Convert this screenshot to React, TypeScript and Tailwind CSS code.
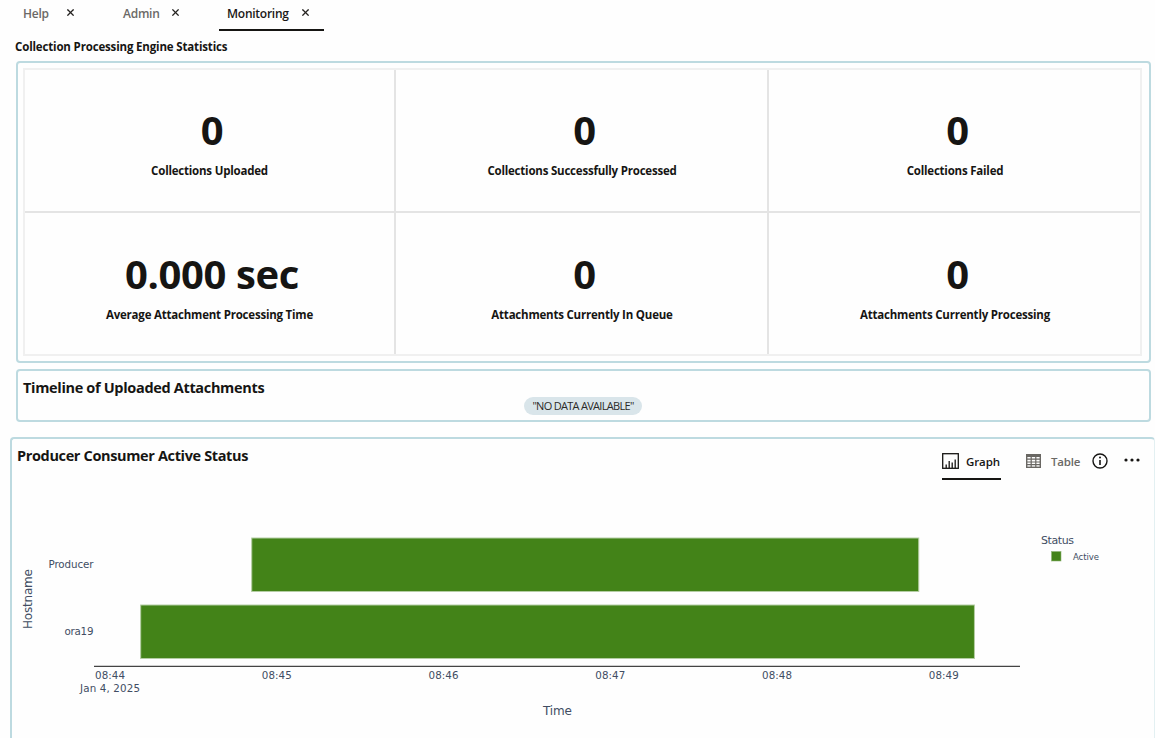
import { X } from "lucide-react"

interface Tab {
  label: string
  active?: boolean
  className: string
  labelClass: string
}

const tabs: Tab[] = [
  { label: "Help", className: "w-[79px] pl-2 mr-[21px]", labelClass: "w-[25px] mr-[17px] text-[#6b6966]" },
  { label: "Admin", className: "w-[79px] pl-2 mr-[25px]", labelClass: "w-[35px] mr-[12px] text-[#6b6966]" },
  { label: "Monitoring", active: true, className: "w-[105px] pl-2", labelClass: "w-[61px] mr-[12px] text-[#1a1816]" },
]

const stats = [
  { value: "0", label: "Collections Uploaded" },
  { value: "0", label: "Collections Successfully Processed" },
  { value: "0", label: "Collections Failed" },
  { value: "0.000 sec", label: "Average Attachment Processing Time" },
  { value: "0", label: "Attachments Currently In Queue" },
  { value: "0", label: "Attachments Currently Processing" },
]

const ticks = ["08:44", "08:45", "08:46", "08:47", "08:48", "08:49"]

// start and end are minutes after 08:44
const rows = [
  { host: "Producer", start: 0.85, end: 4.85, y: 48, labelWidth: 45 },
  { host: "ora19", start: 0.184, end: 5.184, y: 115, labelWidth: 29 },
]

const minuteX = (minute: number) => 98 + minute * 166.75

function TabBar() {
  return (
    <nav className="flex h-8 pl-[15px]">
      {tabs.map((tab) => (
        <div key={tab.label} className={`relative flex h-[31px] items-start pt-1 ${tab.className}`}>
          <span className={`text-[12px] leading-[19px] font-semibold whitespace-nowrap tracking-[-0.25px] ${tab.labelClass}`}>
            {tab.label}
          </span>
          <X className="mt-[3px] h-[11px] w-[11px] text-[#242220]" strokeWidth={2.6} />
          {tab.active && <div className="absolute inset-x-0 bottom-0 h-[2px] bg-[#161513]" />}
        </div>
      ))}
    </nav>
  )
}

function StatGrid() {
  return (
    <section className="ml-4 mt-[5px] h-[302px] w-[1135px] rounded border-2 border-[#bddae0] p-[5px] pr-[7px]">
      <div className="grid h-[288px] grid-cols-[371px_373px_1fr] grid-rows-[143px_1fr] border-2 border-[#f0f0f0]">
        {stats.map((stat, i) => (
          <div
            key={stat.label}
            className={`flex flex-col items-center border-[#e4e4e4] ${i % 3 < 2 ? "border-r-2" : ""} ${i % 3 > 0 ? "pl-px" : ""} ${i < 3 ? "border-b-2 pt-8" : "pt-[33px]"}`}
          >
            <div className="pl-[5px] text-[40px] leading-[56px] font-bold tracking-[-0.4px] whitespace-nowrap">{stat.value}</div>
            <div className="mt-[5px] text-[11.5px] leading-4 font-bold tracking-[-0.21px] whitespace-nowrap">{stat.label}</div>
          </div>
        ))}
      </div>
    </section>
  )
}

function GraphIcon() {
  return (
    <svg width="17" height="16" viewBox="0 0 17 16" fill="none" stroke="#161513" strokeWidth="1.3">
      <rect x="0.7" y="0.7" width="15.6" height="14.6" />
      <path d="M4.2 15v-3.5M7.2 15V8M10.2 15V9.5M13.2 15V6.5" />
    </svg>
  )
}

function TableIcon() {
  return (
    <svg width="15" height="14" viewBox="0 0 15 14" fill="none" stroke="#696763" strokeWidth="1.4">
      <rect x="0.7" y="0.7" width="13.6" height="12.6" />
      <path d="M0 2h15" strokeWidth="2" />
      <path d="M1 5.2h13M1 8h13M1 10.7h13M5.2 2v11M9.8 2v11" strokeWidth="1.2" />
    </svg>
  )
}

function Toolbar() {
  return (
    <div className="flex h-[41px] pt-3 text-[11.5px] leading-[18px] font-semibold">
      <div className="flex h-[29px] w-[59px] border-b-2 border-[#161513]">
        <div className="mt-[2px]"><GraphIcon /></div>
        <span className="ml-[7px] mt-[2px] tracking-[-0.1px]">Graph</span>
      </div>
      <div className="ml-[25px] mt-[3px]"><TableIcon /></div>
      <span className="ml-[10px] mt-[2px] w-[30px] tracking-[-0.2px] text-[#6b6966]">Table</span>
      <svg className="ml-[11px] mt-[2px]" width="16" height="16" viewBox="0 0 16 16" fill="none" stroke="#161513" strokeWidth="1.4">
        <circle cx="8" cy="8" r="7" />
        <path d="M8 7v5" strokeWidth="1.6" />
        <circle cx="8" cy="4.5" r="1" fill="#161513" stroke="none" />
      </svg>
      <svg className="ml-4 mt-[7px]" width="17" height="4" viewBox="0 0 17 4" fill="#161513">
        <circle cx="2" cy="2" r="1.6" />
        <circle cx="8" cy="2" r="1.6" />
        <circle cx="14" cy="2" r="1.6" />
      </svg>
    </div>
  )
}

function StatusChart() {
  return (
    <svg
      className="block font-['DejaVu_Sans',sans-serif]"
      width="1141"
      height="248"
      viewBox="0 0 1141 248"
      fill="#414d63"
      fontSize="10.3"
    >
      {rows.map((row) => (
        <g key={row.host}>
          <text x="81.5" y={row.y + 30} textAnchor="end" textLength={row.labelWidth}>{row.host}</text>
          <rect
            x={minuteX(row.start)}
            y={row.y}
            width={minuteX(row.end) - minuteX(row.start)}
            height="53.5"
            fill="#438318"
            stroke="#b4cda3"
            strokeWidth="1"
          />
        </g>
      ))}
      <path d="M82 176.3H1008" stroke="#444" strokeWidth="1.2" />
      {ticks.map((tick, i) => (
        <text key={tick} x={minuteX(i)} y="188.5" textAnchor="middle" textLength="30">{tick}</text>
      ))}
      <text x={minuteX(0)} y="202" textAnchor="middle" textLength="60">Jan 4, 2025</text>
      <text x="545.5" y="225" textAnchor="middle" fontSize="12" textLength="29">Time</text>
      <text transform="translate(20 109) rotate(-90)" textAnchor="middle" fontSize="12" textLength="60">Hostname</text>
      <text x="1029" y="54" fontSize="11" textLength="33">Status</text>
      <rect x="1039.5" y="61.5" width="9.5" height="9.5" fill="#438318" stroke="#8eb276" strokeWidth="0.6" />
      <text x="1061" y="70" fontSize="8.5" textLength="26">Active</text>
    </svg>
  )
}

export default function App() {
  return (
    <main className="h-[738px] w-[1155px] overflow-hidden bg-[#fefefe] font-['Open_Sans',sans-serif] text-[#161513]">
      <TabBar />
      <h1 className="ml-[15px] mt-[6px] h-[18px] text-[11.5px] leading-[18px] font-bold tracking-[-0.16px]">
        Collection Processing Engine Statistics
      </h1>
      <StatGrid />

      <section className="ml-4 mt-[6px] h-[53px] w-[1135px] rounded border-2 border-[#bddae0]">
        <h2 className="ml-[5px] mt-[7px] h-[19px] text-[14.5px] leading-5 font-bold tracking-[-0.33px]">Timeline of Uploaded Attachments</h2>
        <div className="ml-[506px] flex h-[18px] w-[118px] items-center justify-center rounded-full bg-[#d9e5ea] text-[11px] tracking-[-0.7px] whitespace-nowrap text-[#2b2a28]">
          "NO DATA AVAILABLE"
        </div>
      </section>

      <section className="ml-[10px] mt-[15px] h-[310px] rounded border-2 border-r border-[#bddae0] border-r-[#e3f0f2]">
        <div className="flex h-[51px] justify-between pl-[5px] pr-[13px]">
          <h2 className="mt-[7px] text-[14.5px] leading-5 font-bold tracking-[-0.36px]">Producer Consumer Active Status</h2>
          <Toolbar />
        </div>
        <StatusChart />
      </section>
    </main>
  )
}
